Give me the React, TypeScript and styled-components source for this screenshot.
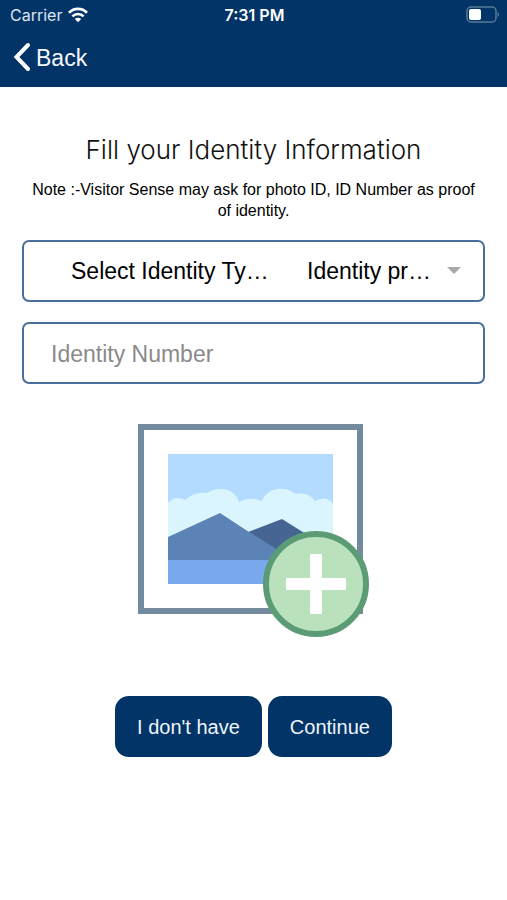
import React from "react";
import styled, { createGlobalStyle } from "styled-components";

const navy = "#023467";
const outline = "#4a7099";
const helvetica = '"Liberation Sans", Arial, sans-serif';
const system = 'Inter, "Liberation Sans", sans-serif';

const GlobalStyle = createGlobalStyle`
  *, *::before, *::after { box-sizing: border-box; }
  body { margin: 0; background: #fff; font-family: ${helvetica}; color: #111; }
  button, input, select { font-family: inherit; }
`;

const Screen = styled.div`
  min-height: 100vh;
  background: #fff;
`;

const Header = styled.header`
  background: ${navy};
  color: #fff;
  padding-bottom: 12px;
`;

const StatusBar = styled.div`
  display: grid;
  grid-template-columns: 1fr auto 1fr;
  align-items: center;
  height: 29px;
  padding: 0 8px 0 10px;
  font: 500 16px/20px ${system};
`;

const Carrier = styled.div`
  display: flex;
  align-items: center;
  gap: 6px;
  font-weight: 400;
  color: #dbe6f2;
`;

const Clock = styled.time`
  font-weight: 600;
`;

const Battery = styled.svg`
  justify-self: end;
`;

const BackButton = styled.button`
  display: flex;
  align-items: center;
  gap: 5px;
  height: 46px;
  padding: 12px 12px 0;
  border: 0;
  background: none;
  color: #f4f8fc;
  font-size: 23px;
  line-height: 32px;
`;

const Content = styled.main`
  display: flex;
  flex-direction: column;
  align-items: center;
  padding: 46px 22px 24px;
`;

const Title = styled.h1`
  margin: 0;
  font: 300 26px/34px ${system};
  text-align: center;
`;

const Note = styled.p`
  margin: 12px 0 0;
  padding: 0 6px;
  font-size: 16px;
  line-height: 21px;
  text-align: center;
  color: #000;
`;

const Form = styled.form`
  display: flex;
  flex-direction: column;
  align-items: center;
  width: 100%;
`;

const Fields = styled.div`
  display: flex;
  flex-direction: column;
  gap: 20px;
  width: 100%;
  margin-top: 19px;
`;

const Field = styled.div`
  display: flex;
  align-items: center;
  height: 62px;
  border: 2px solid ${outline};
  border-radius: 7px;
  font-size: 23px;
  color: #000;
`;

const SelectField = styled(Field)`
  justify-content: space-between;
  padding: 0 22px 0 47px;
`;

const SelectWrap = styled.div`
  display: flex;
  align-items: center;
  gap: 16px;
`;

const Select = styled.select`
  appearance: none;
  border: 0;
  padding: 0;
  background: none;
  color: inherit;
  font-size: 23px;
  line-height: 30px;
`;

const TextInput = styled.input`
  width: 100%;
  height: 100%;
  padding: 2px 27px 0;
  border: 0;
  background: none;
  font-size: 23px;
  color: #000;
  &::placeholder { color: #8a8a8a; opacity: 1; }
`;

const PhotoButton = styled.button`
  display: flex;
  margin: 40px 0 0;
  padding: 0;
  border: 0;
  background: none;
`;

const Actions = styled.div`
  display: flex;
  justify-content: center;
  gap: 6px;
  margin-top: 58px;
`;

const ActionButton = styled.button`
  height: 61px;
  padding: 2px 22px 0;
  border: 0;
  border-radius: 14px;
  background: ${navy};
  color: #eef4fb;
  font-size: 20px;
`;

const WifiIcon = () => (
  <svg width="20" height="16" viewBox="0 0 20 16" aria-hidden="true">
    <g fill="none" stroke="#fff" strokeWidth="2.7">
      <path d="M1 5.8C6 .6 14 .6 19 5.8" />
      <path d="M4.4 9.4c3.2-3.2 8-3.2 11.2 0" />
    </g>
    <path d="M10 15.2l-3.2-3.3c1.8-1.7 4.6-1.7 6.4 0z" fill="#fff" />
  </svg>
);

const BatteryIcon = () => (
  <Battery width="33" height="17" viewBox="0 0 33 17" role="img" aria-label="Battery">
    <rect x="1" y="1" width="29" height="15" rx="4" fill="none" stroke="#577898" strokeWidth="1.5" />
    <path d="M31.5 6v5c2-1 2-4 0-5z" fill="#577898" />
    <rect x="3" y="3" width="12" height="11" rx="2" fill="#fff" />
  </Battery>
);

const ChevronIcon = () => (
  <svg width="19" height="32" viewBox="0 0 19 32" aria-hidden="true">
    <path d="M16 3L4.5 15 16 27" fill="none" stroke="#fff" strokeWidth="4" strokeLinecap="round" strokeLinejoin="miter" />
  </svg>
);

const CaretIcon = () => (
  <svg width="14" height="12" viewBox="0 0 14 12" aria-hidden="true">
    <path d="M0 2h14L7 9z" fill="#a9a9a9" />
  </svg>
);

const AddPhotoIcon = () => (
  <svg width="232" height="214" viewBox="0 0 232 214" aria-hidden="true">
    <rect x="3" y="3" width="219" height="184" fill="#fff" stroke="#748b9e" strokeWidth="6" />
    <rect x="30" y="30" width="165" height="130" fill="#b3daff" />
    <path
      d="M30 79Q37 71 47 76Q57 67 69 69C80 62 97 64 101 78Q112 72 124 77C129 64 146 61 158 70Q169 67 177 77Q187 71 195 79V136H30z"
      fill="#dbf5ff"
    />
    <path d="M110 108l34-13 51 32v12h-60z" fill="#476593" />
    <path d="M30 113l52-24 29 19 45 28H30z" fill="#5b83b5" />
    <rect x="30" y="136" width="165" height="24" fill="#7aa9ed" />
    <circle cx="178" cy="160" r="50" fill="#b9e2bc" stroke="#5b9c76" strokeWidth="6" />
    <path d="M172 130h12v24h24v12h-24v24h-12v-24h-24v-12h24z" fill="#fff" />
  </svg>
);

export default function App() {
  return (
    <Screen>
      <GlobalStyle />
      <Header>
        <StatusBar>
          <Carrier>
            Carrier
            <WifiIcon />
          </Carrier>
          <Clock>7:31 PM</Clock>
          <BatteryIcon />
        </StatusBar>
        <BackButton type="button">
          <ChevronIcon />
          Back
        </BackButton>
      </Header>
      <Content>
        <Title>Fill your Identity Information</Title>
        <Note>Note :-Visitor Sense may ask for photo ID, ID Number as proof of identity.</Note>
        <Form onSubmit={(event) => event.preventDefault()}>
          <Fields>
            <SelectField>
              <label htmlFor="identity-type">Select Identity Ty…</label>
              <SelectWrap>
                <Select id="identity-type">
                  <option>Identity pr…</option>
                </Select>
                <CaretIcon />
              </SelectWrap>
            </SelectField>
            <Field>
              <TextInput type="text" aria-label="Identity Number" placeholder="Identity Number" />
            </Field>
          </Fields>
          <PhotoButton type="button" aria-label="Add photo">
            <AddPhotoIcon />
          </PhotoButton>
          <Actions>
            <ActionButton type="button">I don't have</ActionButton>
            <ActionButton type="submit">Continue</ActionButton>
          </Actions>
        </Form>
      </Content>
    </Screen>
  );
}
